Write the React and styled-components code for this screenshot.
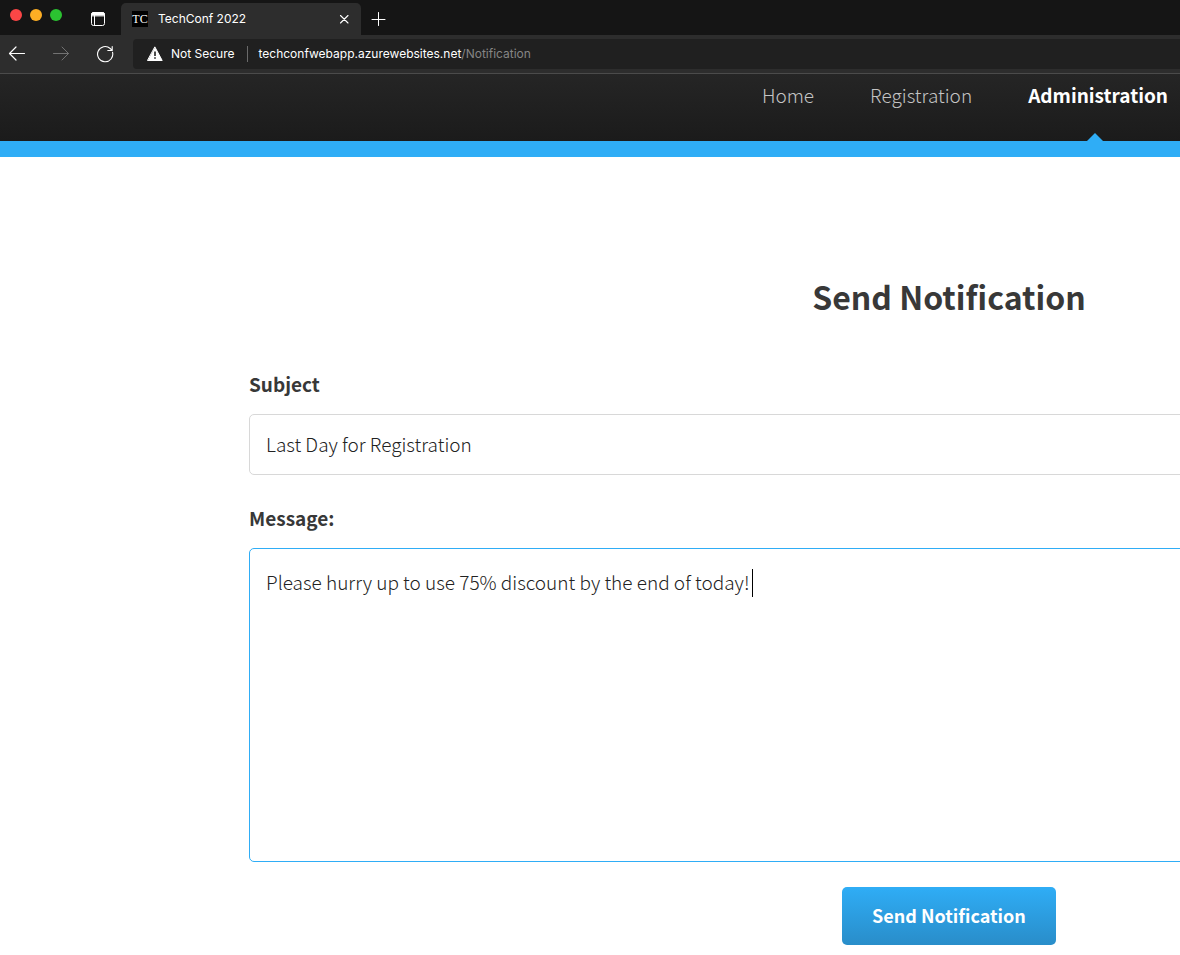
import React from "react";
import styled, { createGlobalStyle } from "styled-components";

const GlobalStyle = createGlobalStyle`
  *, *::before, *::after { box-sizing: border-box; }
  html, body { margin: 0; background: #fff; overflow-x: hidden; }
  body { font-family: "Noto Sans CJK SC", "Noto Sans", sans-serif; color: #383838; }
`;

const Page = styled.div`
  overflow: hidden;
`;

const Browser = styled.div`
  font-family: Inter, "Liberation Sans", sans-serif;
  font-size: 12px;
  color: #fff;
  background: #2d2d2d;
  border-bottom: 1px solid #4b4b4b;
`;

const TabStrip = styled.div`
  display: flex;
  height: 35px;
  background: #151515;
`;

const Lights = styled.div`
  display: flex;
  gap: 8px;
  padding: 9px 0 0 10px;
`;

const Light = styled.span`
  width: 12px;
  height: 12px;
  border-radius: 50%;
  background: ${(p) => p.$color};
`;

const IconButton = styled.button`
  display: flex;
  align-items: center;
  justify-content: center;
  flex: none;
  width: ${(p) => p.$width}px;
  padding: 0;
  border: 0;
  background: none;
  color: ${(p) => (p.$dim ? "#727272" : "#fff")};
`;

const TabMenu = styled(IconButton)`
  margin-left: 24px;
  margin-right: 11px;
  padding-top: 3px;
`;

const Tab = styled.div`
  display: flex;
  align-items: center;
  width: 240px;
  margin-top: 3px;
  padding-left: 11px;
  border-radius: 5px 5px 0 0;
  background: #2d2d2d;
`;

const Favicon = styled.span`
  width: 16px;
  height: 16px;
  margin-right: 10px;
  background: #000;
  font: 12px/16px "Liberation Serif", serif;
  text-align: center;
`;

const TabTitle = styled.span`
  flex: 1;
  line-height: 16px;
`;

const NewTab = styled(IconButton)`
  padding-top: 2px;
`;

const Toolbar = styled.div`
  display: flex;
  height: 38px;
`;

const AddressBar = styled.div`
  display: flex;
  align-items: center;
  flex: 1;
  height: 30px;
  margin: 4px 0 0 11px;
  padding-left: 14px;
  border-radius: 4px 0 0 4px;
  background: #202020;
  white-space: nowrap;
`;

const Security = styled.span`
  margin-left: 8px;
  padding-right: 12px;
  border-right: 1px solid #6a6a6a;
  line-height: 16px;
`;

const Address = styled.span`
  margin-left: 11px;
  line-height: 16px;
`;

const AddressPath = styled.span`
  color: #858585;
`;

const SiteHeader = styled.header`
  height: 83px;
  border-bottom: 16px solid #2fadf6;
  background: linear-gradient(#252525, #1b1b1b);
`;

const Nav = styled.nav`
  display: flex;
  justify-content: flex-end;
  gap: 56px;
  height: 67px;
  padding-right: 12px;
`;

const NavLink = styled.a`
  position: relative;
  padding-top: 7px;
  font-size: 19px;
  line-height: 28px;
  font-weight: ${(p) => (p.$active ? 700 : 300)};
  color: ${(p) => (p.$active ? "#fff" : "#c4c4c4")};
  text-decoration: none;
`;

const Pointer = styled.span`
  position: absolute;
  bottom: 0;
  left: 50%;
  margin-left: -11px;
  border: solid transparent;
  border-width: 0 8px 8px;
  border-bottom-color: #2fadf6;
`;

const Form = styled.form`
  display: flex;
  flex-direction: column;
  min-width: 1400px;
  margin-left: 249px;
  padding: 115px 0 10px;
`;

const Title = styled.h1`
  margin: 0 0 50px;
  font-size: 32px;
  line-height: 48px;
  font-weight: 700;
  text-align: center;
`;

const Label = styled.label`
  margin-bottom: 16px;
  font-size: 19px;
  line-height: 28px;
  font-weight: 700;
`;

const Subject = styled.input`
  height: 61px;
  margin-bottom: 29px;
  padding: 0 16px 2px;
  border: 1px solid #d8d8d8;
  border-radius: 5px;
  outline: 0;
  font: 300 19px/28px "Noto Sans CJK SC", sans-serif;
  color: #222;
`;

const MessageBox = styled.div`
  position: relative;
  display: flex;
  margin-bottom: 25px;
`;

const Message = styled.textarea`
  flex: 1;
  height: 314px;
  padding: 19px 16px;
  border: 1px solid #2fadf6;
  border-radius: 5px;
  outline: 0;
  resize: none;
  font: 300 19px/28px "Noto Sans CJK SC", sans-serif;
  color: #222;
`;

const Caret = styled.span`
  position: absolute;
  top: 21px;
  left: 503px;
  width: 1px;
  height: 28px;
  background: #000;
`;

const Submit = styled.button`
  align-self: center;
  width: 214px;
  height: 58px;
  padding: 0 0 2px;
  border: 0;
  border-radius: 5px;
  background: linear-gradient(#2fadf6, #298dc9);
  font: 700 18px/28px "Noto Sans CJK SC", sans-serif;
  color: #fff;
`;

const Icon = ({ size = 16, children, ...rest }) => (
  <svg width={size} height={size} viewBox={`0 0 ${size} ${size}`} fill="none" stroke="currentColor" strokeLinecap="round" strokeLinejoin="round" aria-hidden="true" {...rest}>
    {children}
  </svg>
);

export default function App() {
  return (
    <Page>
      <GlobalStyle />
      <Browser>
        <TabStrip>
          <Lights>
            <Light $color="#fb4646" />
            <Light $color="#fdae24" />
            <Light $color="#2bc231" />
          </Lights>
          <TabMenu $width={24} aria-label="Tab actions">
            <Icon>
              <rect x="1.5" y="1.5" width="13" height="13" rx="2" />
              <path d="M1.5 4.5V3.5a2 2 0 0 1 2-2h9a2 2 0 0 1 2 2v1z" fill="currentColor" />
              <path d="M4.5 4.5v10" />
            </Icon>
          </TabMenu>
          <Tab>
            <Favicon>TC</Favicon>
            <TabTitle>TechConf 2022</TabTitle>
            <IconButton $width={34} aria-label="Close tab">
              <Icon size={10}><path d="M1.500 1.500l7.500 7.500M9 1.500L1.500 9" strokeWidth="1.100" /></Icon>
            </IconButton>
          </Tab>
          <NewTab $width={34} aria-label="New tab">
            <Icon><path d="M8.500 1.500v13M2 8.500h13" /></Icon>
          </NewTab>
        </TabStrip>
        <Toolbar>
          <IconButton $width={34} aria-label="Back">
            <Icon size={18}><path d="M16.500 8.500h-15M8 2L1.500 8.500L8 15" strokeWidth="1.200" /></Icon>
          </IconButton>
          <IconButton $width={54} $dim aria-label="Forward">
            <Icon size={18}><path d="M1.500 8.500h15M10 2l6.500 6.500L10 15" /></Icon>
          </IconButton>
          <IconButton $width={34} aria-label="Refresh">
            <Icon size={18}><path d="M16.500 7.200A7.600 7.600 0 1 1 14.200 3.500L16 5.300M16.200 1.500v4h-4.400" strokeWidth="1.100" /></Icon>
          </IconButton>
          <AddressBar>
            <Icon>
              <path d="M8 1.200L15.200 14.500H.8z" fill="currentColor" />
              <path d="M8 5.500v4.500M8 11.200v1.600" stroke="#202020" strokeWidth="1.600" strokeLinecap="butt" />
            </Icon>
            <Security>Not Secure</Security>
            <Address>
              techconfwebapp.azurewebsites.net<AddressPath>/Notification</AddressPath>
            </Address>
          </AddressBar>
        </Toolbar>
      </Browser>
      <SiteHeader>
        <Nav>
          <NavLink href="#home">Home</NavLink>
          <NavLink href="#registration">Registration</NavLink>
          <NavLink href="#administration" $active>
            Administration
            <Pointer />
          </NavLink>
        </Nav>
      </SiteHeader>
      <main>
        <Form onSubmit={(e) => e.preventDefault()}>
          <Title>Send Notification</Title>
          <Label htmlFor="subject">Subject</Label>
          <Subject id="subject" defaultValue="Last Day for Registration" />
          <Label htmlFor="message">Message:</Label>
          <MessageBox>
            <Message id="message" defaultValue="Please hurry up to use 75% discount by the end of today!" />
            <Caret />
          </MessageBox>
          <Submit type="submit">Send Notification</Submit>
        </Form>
      </main>
    </Page>
  );
}
